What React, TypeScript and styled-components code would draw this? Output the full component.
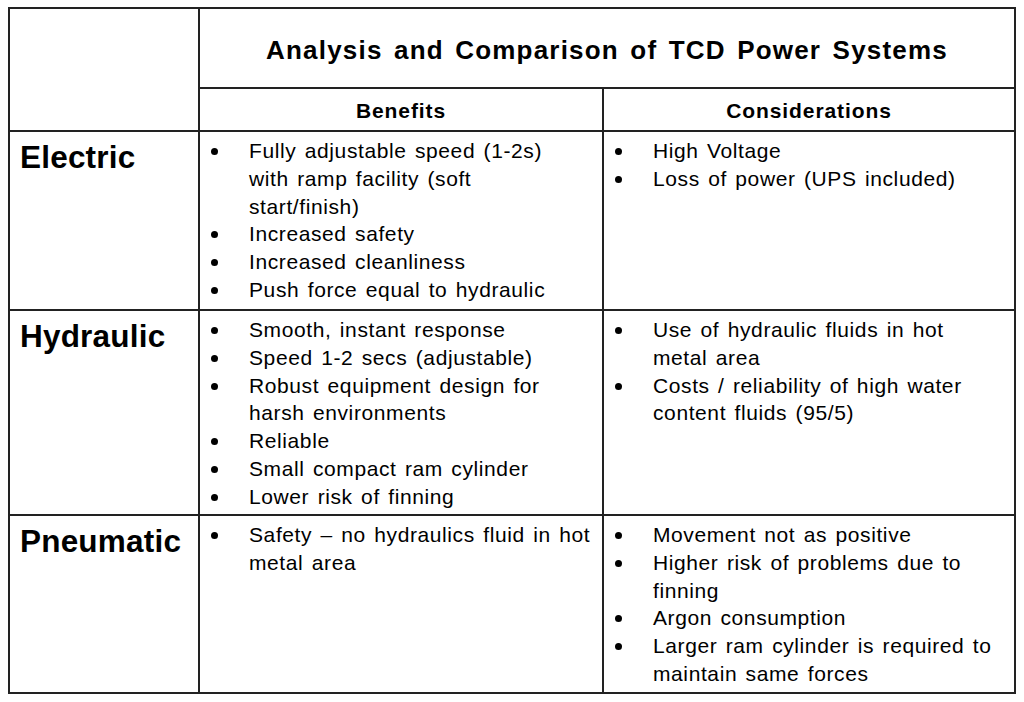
import React from "react";
import styled, { createGlobalStyle } from "styled-components";

const Global = createGlobalStyle`
  html, body { margin: 0; padding: 0; background: #ffffff; }
  body { font-family: "Liberation Sans", Arial, sans-serif; color: #000; }
`;

const Page = styled.div`
  width: 1024px;
  height: 702px;
  padding: 7px 0 0 8px;
  box-sizing: border-box;
  background: #fff;
`;

const Table = styled.div`
  display: grid;
  grid-template-columns: 190px 404px 412px;
  grid-template-rows: 80px 43px 179px 205px 178px;
  width: max-content;
  border-left: 2px solid #222;
  border-top: 2px solid #222;
`;

const Cell = styled.div<{ $rowSpan?: number; $colSpan?: number }>`
  box-sizing: border-box;
  border-right: 2px solid #222;
  border-bottom: 2px solid #222;
  grid-row: ${(p) => (p.$rowSpan ? `span ${p.$rowSpan}` : "auto")};
  grid-column: ${(p) => (p.$colSpan ? `span ${p.$colSpan}` : "auto")};
  min-width: 0;
`;

const TitleCell = styled(Cell)`
  display: flex;
  align-items: center;
  justify-content: center;
  font-weight: bold;
  font-size: 26px;
  letter-spacing: 1.2px;
  word-spacing: 3px;
  padding-top: 4px;
`;

const HeadCell = styled(Cell)`
  display: flex;
  align-items: center;
  justify-content: center;
  font-weight: bold;
  font-size: 21px;
  letter-spacing: 0.9px;
  padding-top: 2px;
`;

const LabelCell = styled(Cell)`
  font-weight: bold;
  font-size: 31.5px;
  line-height: 36px;
  letter-spacing: 0.2px;
  padding: 7px 0 0 10px;
`;

const ListCell = styled(Cell)`
  padding-top: 5px;
`;

const List = styled.ul`
  list-style: none;
  margin: 0;
  padding: 0;
`;

const Item = styled.li`
  display: flex;
  font-size: 21px;
  line-height: 27.8px;
  letter-spacing: 0.6px;
  word-spacing: 2px;
`;

const Bullet = styled.span`
  flex: 0 0 49px;
  position: relative;
  &::before {
    content: "";
    position: absolute;
    left: 11px;
    top: 11px;
    width: 7px;
    height: 7px;
    border-radius: 50%;
    background: #000;
  }
`;

const Text = styled.span`
  white-space: pre;
`;

type Row = { label: string; benefits: string[]; considerations: string[] };

const rows: Row[] = [
  {
    label: "Electric",
    benefits: [
      "Fully adjustable speed (1-2s)\nwith ramp facility (soft\nstart/finish)",
      "Increased safety",
      "Increased cleanliness",
      "Push force equal to hydraulic",
    ],
    considerations: ["High Voltage", "Loss of power (UPS included)"],
  },
  {
    label: "Hydraulic",
    benefits: [
      "Smooth, instant response",
      "Speed 1-2 secs (adjustable)",
      "Robust equipment design for\nharsh environments",
      "Reliable",
      "Small compact ram cylinder",
      "Lower risk of finning",
    ],
    considerations: [
      "Use of hydraulic fluids in hot\nmetal area",
      "Costs / reliability of high water\ncontent fluids (95/5)",
    ],
  },
  {
    label: "Pneumatic",
    benefits: ["Safety \u2013 no hydraulics fluid in hot\nmetal area"],
    considerations: [
      "Movement not as positive",
      "Higher risk of problems due to\nfinning",
      "Argon consumption",
      "Larger ram cylinder is required to\nmaintain same forces",
    ],
  },
];

const Bullets: React.FC<{ items: string[] }> = ({ items }) => (
  <List>
    {items.map((t) => (
      <Item key={t}>
        <Bullet />
        <Text>{t}</Text>
      </Item>
    ))}
  </List>
);

export default function App() {
  return (
    <Page>
      <Global />
      <Table>
        <Cell $rowSpan={2} />
        <TitleCell $colSpan={2}>Analysis and Comparison of TCD Power Systems</TitleCell>
        <HeadCell>Benefits</HeadCell>
        <HeadCell>Considerations</HeadCell>
        {rows.map((r) => (
          <React.Fragment key={r.label}>
            <LabelCell>{r.label}</LabelCell>
            <ListCell>
              <Bullets items={r.benefits} />
            </ListCell>
            <ListCell>
              <Bullets items={r.considerations} />
            </ListCell>
          </React.Fragment>
        ))}
      </Table>
    </Page>
  );
}
